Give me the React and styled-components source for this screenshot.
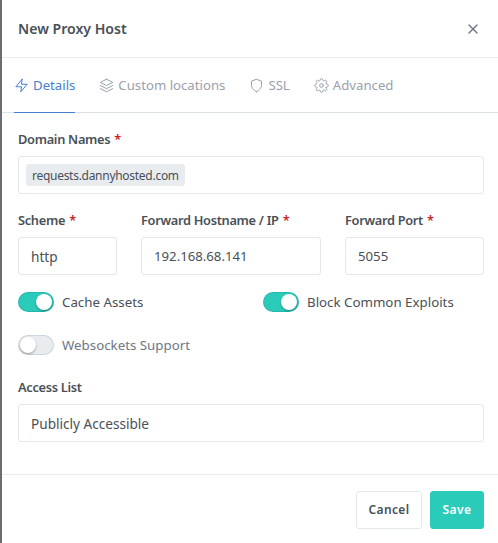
import React from "react";
import styled, { createGlobalStyle } from "styled-components";
import { FiZap, FiLayers, FiShield, FiSettings, FiX } from "react-icons/fi";

const GlobalStyle = createGlobalStyle`
  html, body {
    margin: 0;
    padding: 0;
    background: #ffffff;
  }
  * {
    box-sizing: border-box;
  }
`;

const Page = styled.div`
  width: 498px;
  height: 543px;
  overflow: hidden;
  display: flex;
  background: #ffffff;
  font-family: "Noto Sans", "Liberation Sans", sans-serif;
  color: #495057;
`;

const Backdrop = styled.div`
  width: 2px;
  flex: none;
  background: #6b6d70;
`;

const Modal = styled.section`
  flex: 1;
  display: flex;
  flex-direction: column;
  min-width: 0;
`;

const Header = styled.header`
  height: 58px;
  flex: none;
  display: flex;
  align-items: center;
  justify-content: space-between;
  padding: 0 17px 0 16px;
  border-bottom: 1px solid #e9ecef;
`;

const Title = styled.h1`
  margin: 0 0 1px;
  font-size: 14.1px;
  font-weight: 600;
  color: #495057;
`;

const CloseButton = styled.button`
  display: flex;
  padding: 0;
  border: 0;
  background: none;
  color: #6e7687;
  font-size: 16px;
`;

const Tabs = styled.nav`
  height: 55px;
  flex: none;
  display: flex;
  gap: 24px;
  padding-left: 12px;
  border-bottom: 1px solid #dee2e6;
`;

const Tab = styled.a`
  height: 55px;
  display: flex;
  align-items: center;
  gap: 4px;
  font-size: 13.2px;
  color: ${props => (props.$active ? "#467fcf" : "#9aa0ac")};
  border-bottom: 1px solid ${props => (props.$active ? "#467fcf" : "transparent")};

  svg {
    width: 15px;
    height: 15px;
    stroke-width: 1.6;
  }
`;

const Body = styled.div`
  flex: 1;
  display: flex;
  flex-direction: column;
  gap: 16px;
  padding: 16px 14px 0 16px;
`;

const Row = styled.div`
  display: grid;
  grid-template-columns: ${props => props.$columns || "1fr"};
  column-gap: 24px;
`;

const Field = styled.div`
  display: flex;
  flex-direction: column;
`;

const Label = styled.label`
  height: 19px;
  margin-bottom: 8px;
  line-height: 21px;
  font-size: 12.8px;
  font-weight: 600;
  letter-spacing: -0.3px;
  color: #495057;
`;

const Required = styled.span`
  margin-left: 1px;
  color: #cd201f;
`;

const Input = styled.div`
  height: 38px;
  display: flex;
  align-items: center;
  padding: 0 12px;
  background: #ffffff;
  border: 1px solid #e4e7ee;
  border-radius: 3px;
  font-size: ${props => (props.$select ? "13.6px" : "13.2px")};
  color: #495057;
`;

const TagInput = styled(Input)`
  padding: 0 7px;
`;

const Tag = styled.span`
  height: 22px;
  display: flex;
  align-items: center;
  padding: 0 6px;
  background: #e9ecef;
  border-radius: 3px;
  font-size: 12px;
  letter-spacing: -0.28px;
`;

const Toggles = styled.div`
  display: flex;
  flex-direction: column;
  gap: 23px;
  margin: 1px 0 6px;
`;

const ToggleLabel = styled.div`
  display: flex;
  align-items: center;
  gap: 8px;
  height: 20px;
  font-size: 13.3px;
  color: ${props => (props.$on ? "#495057" : "#6e7687")};
`;

const Track = styled.span`
  position: relative;
  flex: none;
  width: 36px;
  height: 20px;
  border-radius: 10px;
  background: ${props => (props.$on ? "#2bcbba" : "#e9ecef")};
  border: 1px solid rgba(0, 40, 100, 0.12);
`;

const Thumb = styled.span`
  position: absolute;
  top: 1px;
  left: ${props => (props.$on ? "17px" : "1px")};
  width: 16px;
  height: 16px;
  border-radius: 50%;
  background: #ffffff;
  box-shadow: 0 1px 2px rgba(0, 0, 0, 0.35);
`;

const Footer = styled.footer`
  height: 69px;
  flex: none;
  display: flex;
  justify-content: flex-end;
  align-items: flex-start;
  gap: 8px;
  padding: 16px 14px 0 0;
  border-top: 1px solid #e9ecef;
`;

const Button = styled.button`
  height: 38px;
  width: ${props => (props.$save ? "54px" : "66px")};
  padding: 0 0 2px;
  border-radius: 3px;
  border: 1px solid ${props => (props.$save ? "#2bcbba" : "#e4e7ee")};
  background: ${props => (props.$save ? "#2bcbba" : "#ffffff")};
  color: ${props => (props.$save ? "#ffffff" : "#495057")};
  font-family: inherit;
  font-size: 12px;
  font-weight: 600;
  letter-spacing: 0.4px;
`;

const Toggle = ({ on, children }) => (
  <ToggleLabel $on={on}>
    <Track $on={on}>
      <Thumb $on={on} />
    </Track>
    {children}
  </ToggleLabel>
);

export default function App() {
  return (
    <Page>
      <GlobalStyle />
      <Backdrop />
      <Modal>
        <Header>
          <Title>New Proxy Host</Title>
          <CloseButton>
            <FiX />
          </CloseButton>
        </Header>
        <Tabs>
          <Tab $active>
            <FiZap />
            Details
          </Tab>
          <Tab>
            <FiLayers />
            Custom locations
          </Tab>
          <Tab>
            <FiShield />
            SSL
          </Tab>
          <Tab>
            <FiSettings />
            Advanced
          </Tab>
        </Tabs>
        <Body>
          <Field>
            <Label>
              Domain Names <Required>*</Required>
            </Label>
            <TagInput>
              <Tag>requests.dannyhosted.com</Tag>
            </TagInput>
          </Field>
          <Row $columns="99px 180px 139px">
            <Field>
              <Label>
                Scheme <Required>*</Required>
              </Label>
              <Input $select>http</Input>
            </Field>
            <Field>
              <Label>
                Forward Hostname / IP <Required>*</Required>
              </Label>
              <Input>192.168.68.141</Input>
            </Field>
            <Field>
              <Label>
                Forward Port <Required>*</Required>
              </Label>
              <Input>5055</Input>
            </Field>
          </Row>
          <Toggles>
            <Row $columns="1fr 1fr">
              <Toggle on>Cache Assets</Toggle>
              <Toggle on>Block Common Exploits</Toggle>
            </Row>
            <Toggle>Websockets Support</Toggle>
          </Toggles>
          <Field>
            <Label>Access List</Label>
            <Input $select>Publicly Accessible</Input>
          </Field>
        </Body>
        <Footer>
          <Button>Cancel</Button>
          <Button $save>Save</Button>
        </Footer>
      </Modal>
    </Page>
  );
}
